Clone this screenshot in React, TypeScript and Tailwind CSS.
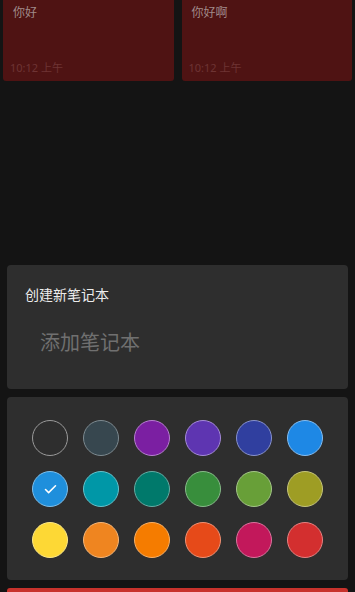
import { Check } from "lucide-react";

const NOTES = [
  { title: "你好", time: "10:12 上午" },
  { title: "你好啊", time: "10:12 上午" },
];

// ring is a lighter tint of the fill
const COLORS = [
  { fill: "bg-transparent", ring: "border-[#9a9a9a]" },
  { fill: "bg-[#37474f]", ring: "border-[#7d8a90]" },
  { fill: "bg-[#7b1fa2]", ring: "border-[#b77fd0]" },
  { fill: "bg-[#5e35b1]", ring: "border-[#a58bd8]" },
  { fill: "bg-[#303f9f]", ring: "border-[#8892cc]" },
  { fill: "bg-[#1e88e5]", ring: "border-[#86bdf0]" },
  { fill: "bg-[#1f8fdc]", ring: "border-[#7fbfea]", selected: true },
  { fill: "bg-[#0097a7]", ring: "border-[#66c1ca]" },
  { fill: "bg-[#00796b]", ring: "border-[#66aca4]" },
  { fill: "bg-[#388e3c]", ring: "border-[#88bb8a]" },
  { fill: "bg-[#689f38]", ring: "border-[#a4c588]" },
  { fill: "bg-[#9e9d24]", ring: "border-[#c5c47c]" },
  { fill: "bg-[#fdd835]", ring: "border-[#fde886]" },
  { fill: "bg-[#ef8520]", ring: "border-[#f5b679]" },
  { fill: "bg-[#f57c00]", ring: "border-[#f9b066]" },
  { fill: "bg-[#e64a19]", ring: "border-[#f09275]" },
  { fill: "bg-[#c2185b]", ring: "border-[#da749d]" },
  { fill: "bg-[#d32f2f]", ring: "border-[#e58282]" },
];

export default function App() {
  return (
    <div
      className="h-[592px] w-[355px] overflow-hidden bg-[#141414] flex flex-col"
      style={{ fontFamily: '"Noto Sans", "Noto Sans CJK SC", sans-serif' }}
    >
      {/* notes behind the sheet */}
      <div className="grid grid-cols-2 gap-[8px] px-[3px]">
        {NOTES.map((note) => (
          <div
            key={note.title}
            className="h-[81px] rounded-b-[3px] bg-[#4f1313] flex flex-col justify-between pl-[7px] pt-[4px] pb-[6px]"
          >
            <span className="pl-[3px] text-[12px] leading-[18px] text-[#a08a8a]">
              {note.title}
            </span>
            <span className="text-[11px] leading-[14px] text-[#6e3434]">
              {note.time}
            </span>
          </div>
        ))}
      </div>

      <div className="flex-1" />

      {/* new notebook sheet */}
      <div className="px-[7px] flex flex-col gap-[8px]">
        <div className="h-[124px] rounded-[4px] bg-[#2e2e2e] pt-[20px] pl-[18px]">
          <div className="text-[14px] leading-[20px] text-[#ececec]">创建新笔记本</div>
          <div className="mt-[25px] pl-[15px] text-[20px] leading-[26px] text-[#707070]">
            添加笔记本
          </div>
        </div>

        <div className="h-[183px] rounded-[4px] bg-[#2e2e2e] pt-[23px] pl-[25px]">
          <div className="grid grid-cols-[repeat(6,36px)] gap-[15px]">
            {COLORS.map((c, i) => (
              <div
                key={i}
                className={`h-[36px] w-[36px] rounded-full border ${c.fill} ${c.ring} flex items-center justify-center`}
              >
                {c.selected && <Check size={15} strokeWidth={2.5} className="text-white" />}
              </div>
            ))}
          </div>
        </div>

        <div className="h-[4px] rounded-t-[3px] bg-[#c8322c]" />
      </div>
    </div>
  );
}
